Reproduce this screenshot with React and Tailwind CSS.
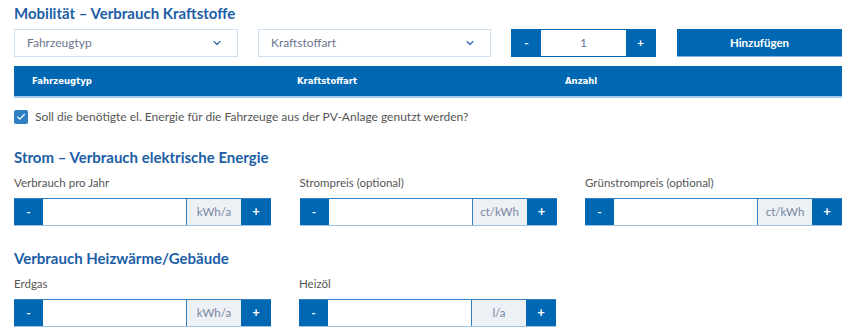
import { ChevronDown, Check } from 'lucide-react';

function Select({ label }) {
  return (
    <div className="flex h-[28px] flex-1 items-center justify-between border border-[#cfe0f0] bg-white pl-[12px] pr-[14px] text-[12px] text-[#6a7590]">
      <span>{label}</span>
      <ChevronDown size={12} strokeWidth={2.5} className="text-[#3a6fb0]" />
    </div>
  );
}

function NumberField({ label, unit }) {
  return (
    <div className="flex w-[257px] flex-col">
      <div className="mb-[7px] h-[16px] text-[11.5px] leading-[16px] text-[#555]">{label}</div>
      <div className="flex h-[28px] border-y border-t-[#2f7fc4] border-b-[#9cc3e6]">
        <button className="w-[29px] bg-[#0068b3] text-[12px] font-bold text-white">-</button>
        <div className="flex-1 border-r border-[#2f7fc4] bg-white" />
        <div className="flex w-[54px] items-center justify-center bg-[#edf1f6] text-[11.5px] text-[#7886a0]">{unit}</div>
        <button className="w-[30px] bg-[#0068b3] text-[13px] font-bold text-white">+</button>
      </div>
    </div>
  );
}

function Heading({ children }) {
  return <h2 className="text-[15px] font-bold leading-[20px] text-[#1c5ea6]">{children}</h2>;
}

export default function App() {
  return (
    <div className="w-[848px] bg-white pl-[14px] pr-[6px] pt-[3px] text-[#555]" style={{ fontFamily: '"Lato", sans-serif' }}>
      <Heading>Mobilität – Verbrauch Kraftstoffe</Heading>

      <div className="mt-[6px] flex h-[28px] items-stretch">
        <div className="flex w-[224px]"><Select label="Fahrzeugtyp" /></div>
        <div className="ml-[20px] flex w-[233px]"><Select label="Kraftstoffart" /></div>
        <div className="ml-[20px] flex w-[145px] border border-[#0068b3]">
          <button className="w-[29px] bg-[#0068b3] text-[12px] font-bold text-white">-</button>
          <div className="flex flex-1 items-center justify-center bg-white text-[12px] text-[#6a7590]">1</div>
          <button className="w-[29px] bg-[#0068b3] text-[12px] font-bold text-white">+</button>
        </div>
        <button className="ml-[21px] flex-1 border-b border-[#7fb0dd] bg-[#0068b3] text-[11.5px] font-bold text-white">Hinzufügen</button>
      </div>

      <div className="mt-[9px] flex h-[32px] items-center border-b-2 border-[#a6c9ea] bg-[#0068b3] font-['DejaVu_Sans',sans-serif] text-[8.5px] font-bold text-white">
        <div className="w-[283px] pl-[18px]">Fahrzeugtyp</div>
        <div className="w-[268px]">Kraftstoffart</div>
        <div>Anzahl</div>
      </div>

      <label className="mt-[11px] flex items-center gap-[7px] text-[12px] leading-[16px] text-[#555]">
        <span className="flex h-[14px] w-[14px] items-center justify-center rounded-[2px] bg-[#2f7fc4]">
          <Check size={10} strokeWidth={3} className="text-white" />
        </span>
        Soll die benötigte el. Energie für die Fahrzeuge aus der PV-Anlage genutzt werden?
      </label>

      <div className="mt-[22px]">
        <Heading>Strom – Verbrauch elektrische Energie</Heading>
      </div>
      <div className="mt-[8px] flex justify-between">
        <NumberField label="Verbrauch pro Jahr" unit="kWh/a" />
        <NumberField label="Strompreis (optional)" unit="ct/kWh" />
        <NumberField label="Grünstrompreis (optional)" unit="ct/kWh" />
      </div>

      <div className="mt-[22px]">
        <Heading>Verbrauch Heizwärme/Gebäude</Heading>
      </div>
      <div className="mt-[8px] flex gap-[28px] pb-[7px]">
        <NumberField label="Erdgas" unit="kWh/a" />
        <NumberField label="Heizöl" unit="l/a" />
      </div>
    </div>
  );
}
